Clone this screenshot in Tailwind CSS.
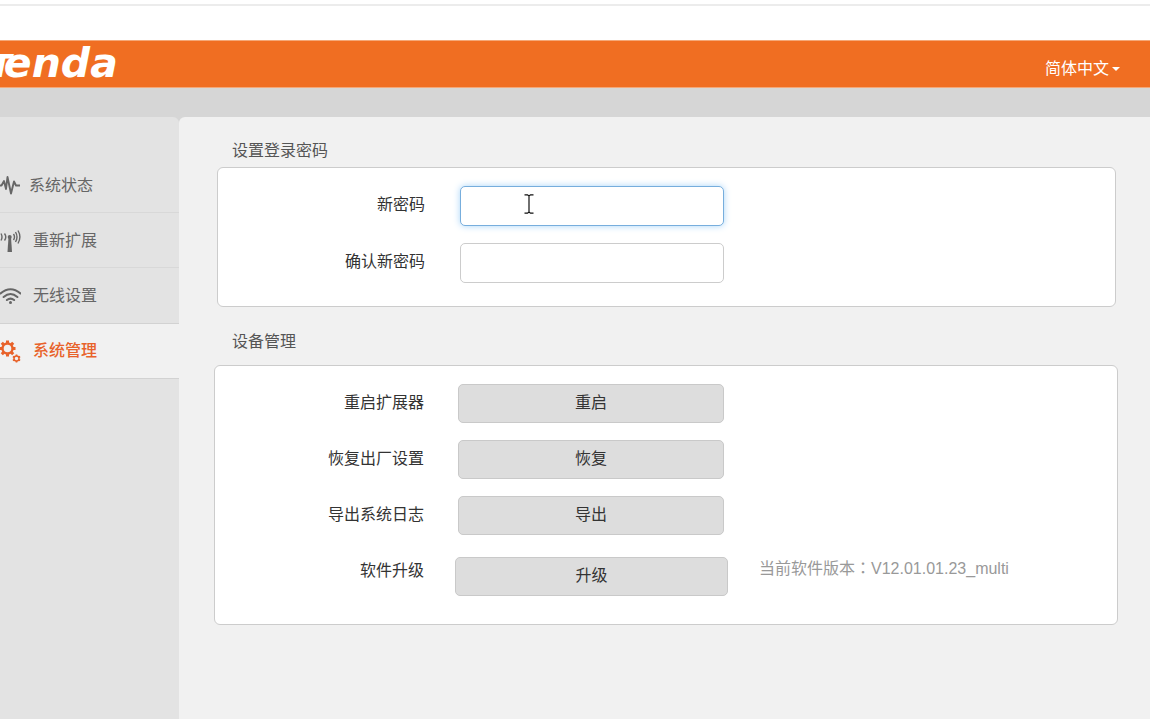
<!DOCTYPE html>
<html lang="zh-CN">
<head>
<meta charset="utf-8">
<meta name="viewport" content="width=device-width, initial-scale=1">
<title>Tenda - 系统管理</title>
<script src="https://cdn.jsdelivr.net/npm/@tailwindcss/browser@4"></script>
</head>
<body class="flex min-h-screen flex-col overflow-x-hidden bg-white font-['Liberation_Sans','Noto_Sans_CJK_SC',sans-serif] text-base leading-6 text-[#333]">
  <div class="h-10 pt-1"><div class="h-0.5 bg-[#ececec]"></div></div>

  <header class="flex h-12 items-center justify-between overflow-hidden border-y border-[#f5a878] bg-[#f06e22] pr-[30px] text-white">
    <a href="#" class="-ml-2.5 flex items-baseline font-['DejaVu_Sans',sans-serif] text-[41px] leading-[46px] font-bold italic"><span class="-mr-2 text-[32px]">T</span>enda</a>
    <button type="button" class="mt-2.5 flex items-center gap-[3px]">简体中文
      <svg class="h-1 w-2" viewBox="0 0 8 4" fill="currentColor" aria-hidden="true"><path d="M0 0h8L4 4z"/></svg>
    </button>
  </header>

  <div class="flex grow flex-col bg-[#d6d6d6] pt-[29px]">
    <div class="flex grow">
      <nav class="w-[179px] shrink-0 rounded-tr-md bg-[#e3e3e3] pt-[41px] text-[#666]">
        <a href="#" class="flex h-[55px] items-center gap-[9px] border-b border-[#d8d8d8] pt-0.5">
          <svg class="h-5 w-5" viewBox="0 0 20 20" fill="none" stroke="#666" stroke-width="1.900" stroke-linejoin="round" aria-hidden="true"><path d="M0 9.500h1.500L4 5l2 8L7.500 1 11 17.500 14 5.500l2 4H20"/></svg>
          系统状态
        </a>
        <a href="#" class="flex h-[55px] items-center gap-3 border-b border-[#d8d8d8] pt-0.5">
          <svg class="h-6 w-[21px]" viewBox="0 0 21 24" fill="none" stroke="#666" stroke-width="1.400" aria-hidden="true"><path d="M8.500 8 7.500 23h4.500L11 8z" fill="#666" stroke="none"/><circle cx="9.700" cy="8" r="2" fill="#666" stroke="none"/><path d="M4.500 4.500q2.600 3.500 0 7M1 4.500q2 3.500 0 7M13.500 5q2 3 0 6M15.500 3q3 5 0 10M18 1.500q3.800 6.500 0 13"/></svg>
          重新扩展
        </a>
        <a href="#" class="flex h-[56px] items-center gap-3 border-b border-[#d2d2d2]">
          <svg class="h-4 w-[21px]" viewBox="0 0 21 16" fill="none" stroke="#666" stroke-width="2.100" stroke-linecap="round" aria-hidden="true"><path d="M.5 5.500q10-8.500 20 0M3.600 9q6.900-6 13.800 0M6.900 12q3.600-2.900 7.200 0"/><circle cx="10.500" cy="14.500" r="1.500" fill="#666" stroke="none"/></svg>
          无线设置
        </a>
        <a href="#" aria-current="page" class="flex h-[55px] items-center gap-3 border-b border-[#d2d2d2] bg-[#f1f1f1] font-medium text-[#e8622a]">
          <svg class="h-6 w-[21px]" viewBox="0 0 21 24" fill="none" stroke="#e8622a" aria-hidden="true"><circle cx="7.500" cy="9.500" r="5" stroke-width="2.400"/><path stroke-width="3" d="M7.500 1.500v2.500M7.500 15v2.500M-.5 9.500H2M13 9.500h2.500M1.800 3.800l1.800 1.800M11.400 13.400l1.800 1.800M13.200 3.800l-1.800 1.800M3.600 13.400l-1.800 1.800"/><circle cx="16.500" cy="19.500" r="2.500" stroke-width="1.500"/><path stroke-width="1.700" d="M16.500 15.500v1.500M16.500 22v1.500M12.900 17.500l1.400.8M18.700 20.700l1.400.8M12.900 21.500l1.400-.8M18.700 18.300l1.400-.8"/></svg>
          系统管理
        </a>
      </nav>

      <main class="min-w-0 grow rounded-tl-md bg-[#f1f1f1] pt-[22px] pr-8 pl-[35px]">
        <section>
          <h2 class="pl-[18px] text-[#555]">设置登录密码</h2>
          <form class="mr-0.5 ml-[3px] mt-1 flex h-[140px] flex-col gap-[17px] rounded-md border border-[#ccc] bg-white pt-[18px]">
            <div class="flex h-10 items-center gap-[35px]">
              <label for="new-password" class="mb-0.5 w-[207px] text-right">新密码</label>
              <div class="relative">
                <input id="new-password" type="password" class="block h-10 w-[264px] rounded-[5px] border border-[#77aedd] bg-white px-3 shadow-[0_0_7px_#a9d5f8] outline-none">
                <svg class="absolute top-2 left-16 h-5 w-[10px]" viewBox="0 0 10 20" fill="none" stroke="#111" stroke-width="1.200" aria-hidden="true"><path d="M.5.800h3L5 2l1.500-1.200h3M5 2v16M.5 19.200h3L5 18l1.500 1.200h3"/></svg>
              </div>
            </div>
            <div class="flex h-10 items-center gap-[35px]">
              <label for="confirm-password" class="mb-0.5 w-[207px] text-right">确认新密码</label>
              <input id="confirm-password" type="password" class="block h-10 w-[264px] rounded-[5px] border border-[#ccc] bg-white px-3 outline-none">
            </div>
          </form>
        </section>

        <section class="mt-[23px]">
          <h2 class="pl-[18px] text-[#555]">设备管理</h2>
          <div class="mt-[11px] flex h-[260px] flex-col gap-[17px] rounded-md border border-[#ccc] bg-white pt-[18px]">
            <div class="flex h-[39px] items-center gap-[34px]">
              <span id="restart" class="mb-0.5 w-[209px] text-right">重启扩展器</span>
              <button type="button" aria-describedby="restart" class="h-[39px] w-[266px] rounded-[5px] border border-[#c9c9c9] bg-[#ddd] pb-0.5">重启</button>
            </div>
            <div class="flex h-[39px] items-center gap-[34px]">
              <span id="restore" class="mb-0.5 w-[209px] text-right">恢复出厂设置</span>
              <button type="button" aria-describedby="restore" class="h-[39px] w-[266px] rounded-[5px] border border-[#c9c9c9] bg-[#ddd] pb-0.5">恢复</button>
            </div>
            <div class="flex h-[39px] items-center gap-[34px]">
              <span id="export" class="mb-0.5 w-[209px] text-right">导出系统日志</span>
              <button type="button" aria-describedby="export" class="h-[39px] w-[266px] rounded-[5px] border border-[#c9c9c9] bg-[#ddd] pb-0.5">导出</button>
            </div>
            <div class="flex items-start gap-[31px]">
              <span id="upgrade" class="mt-[7px] w-[209px] text-right">软件升级</span>
              <button type="button" aria-describedby="upgrade" class="mt-[5px] h-[39px] w-[273px] rounded-[5px] border border-[#c9c9c9] bg-[#ddd] pb-0.5">升级</button>
              <span class="mt-[5px] text-[#999]">当前软件版本<span lang="zh-TW" class="font-['Noto_Sans_CJK_TC',sans-serif] leading-none">：</span>V12.01.01.23_multi</span>
            </div>
          </div>
        </section>
      </main>
    </div>
  </div>
</body>
</html>
